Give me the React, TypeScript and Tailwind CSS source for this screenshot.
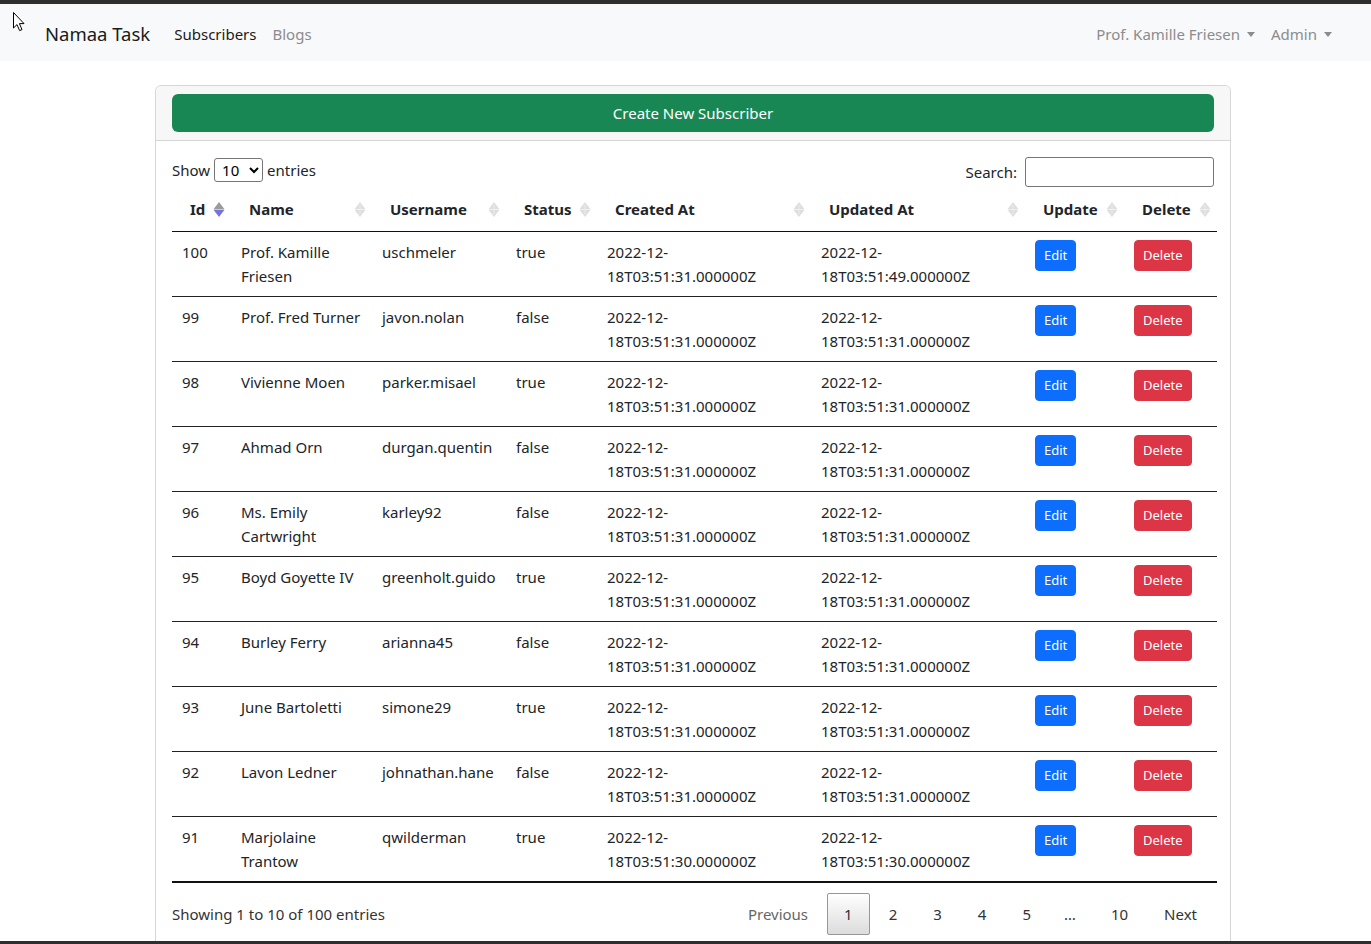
import React from "react";

type Row = {
  id: number;
  name: string[];
  username: string;
  status: string;
  created: string;
  updated: string;
};

const rows: Row[] = [
  { id: 100, name: ["Prof. Kamille", "Friesen"], username: "uschmeler", status: "true", created: "18T03:51:31.000000Z", updated: "18T03:51:49.000000Z" },
  { id: 99, name: ["Prof. Fred Turner"], username: "javon.nolan", status: "false", created: "18T03:51:31.000000Z", updated: "18T03:51:31.000000Z" },
  { id: 98, name: ["Vivienne Moen"], username: "parker.misael", status: "true", created: "18T03:51:31.000000Z", updated: "18T03:51:31.000000Z" },
  { id: 97, name: ["Ahmad Orn"], username: "durgan.quentin", status: "false", created: "18T03:51:31.000000Z", updated: "18T03:51:31.000000Z" },
  { id: 96, name: ["Ms. Emily", "Cartwright"], username: "karley92", status: "false", created: "18T03:51:31.000000Z", updated: "18T03:51:31.000000Z" },
  { id: 95, name: ["Boyd Goyette IV"], username: "greenholt.guido", status: "true", created: "18T03:51:31.000000Z", updated: "18T03:51:31.000000Z" },
  { id: 94, name: ["Burley Ferry"], username: "arianna45", status: "false", created: "18T03:51:31.000000Z", updated: "18T03:51:31.000000Z" },
  { id: 93, name: ["June Bartoletti"], username: "simone29", status: "true", created: "18T03:51:31.000000Z", updated: "18T03:51:31.000000Z" },
  { id: 92, name: ["Lavon Ledner"], username: "johnathan.hane", status: "false", created: "18T03:51:31.000000Z", updated: "18T03:51:31.000000Z" },
  { id: 91, name: ["Marjolaine", "Trantow"], username: "qwilderman", status: "true", created: "18T03:51:30.000000Z", updated: "18T03:51:30.000000Z" },
];

function SortIcon({ active = false }: { active?: boolean }) {
  return (
    <svg width="14" height="17" viewBox="0 0 14 17" className="shrink-0">
      <path d="M7 1 L12.5 8.2 L1.5 8.2 Z" fill={active ? "#9b9b9b" : "#dedede"} />
      <path d="M1.5 8.8 L12.5 8.8 L7 16 Z" fill={active ? "#7474dc" : "#dedede"} />
      {!active && <path d="M7 3.5 L7 13.5" stroke="#ececec" strokeWidth="1" />}
    </svg>
  );
}

function Caret() {
  return (
    <span className="inline-block w-0 h-0 ml-[7px] border-l-[4.5px] border-r-[4.5px] border-t-[5px] border-l-transparent border-r-transparent border-t-current align-middle" />
  );
}

const headers: { label: string; active?: boolean }[] = [
  { label: "Id", active: true },
  { label: "Name" },
  { label: "Username" },
  { label: "Status" },
  { label: "Created At" },
  { label: "Updated At" },
  { label: "Update" },
  { label: "Delete" },
];

const widths = [59, 141, 134, 91, 214, 214, 99, 93];

export default function App() {
  return (
    <div className="relative h-[944px] flex flex-col overflow-hidden bg-white font-['Noto_Sans',sans-serif] text-[15px] text-[#212529]">
      <div className="h-1 shrink-0 bg-[#2e2e2e]" />

      <nav className="h-[57px] shrink-0 bg-[#f8f9fa] flex items-center pt-[3px] pl-[45px] pr-[31px]">
        <span className="text-[18.5px] text-[#1a1a1a] mr-4">Namaa Task</span>
        <span className="px-2 text-[#1a1a1a]">Subscribers</span>
        <span className="px-2 text-[#8b8c8d]">Blogs</span>
        <div className="ml-auto flex items-center text-[#8b8c8d]">
          <span className="px-2 flex items-center">
            Prof. Kamille Friesen
            <Caret />
          </span>
          <span className="px-2 flex items-center">
            Admin
            <Caret />
          </span>
        </div>
      </nav>

      <main className="flex-1 overflow-hidden pt-6 pl-[155px]">
        <div className="w-[1076px] border border-[#d6d6d6] rounded-md">
          <div className="bg-[#f7f7f7] border-b border-[#d6d6d6] px-4 py-2 rounded-t-md">
            <button className="w-full h-[38px] rounded-md bg-[#198754] text-white text-[15px]">
              Create New Subscriber
            </button>
          </div>

          <div className="px-4 pt-4 pb-4">
            <div className="flex justify-between h-[30px]">
              <div className="flex items-center h-[26px]">
                <span>Show</span>
                <select
                  defaultValue="10"
                  className="mx-[4px] w-[49px] h-[24px] border border-[#767676] rounded-[3px] bg-white text-[15px] pl-[3px] text-black"
                >
                  <option value="10">10</option>
                  <option value="25">25</option>
                  <option value="50">50</option>
                  <option value="100">100</option>
                </select>
                <span>entries</span>
              </div>
              <div className="flex items-center">
                <span className="mr-2">Search:</span>
                <input className="w-[189px] h-[30px] border border-[#767676] rounded-[3px] bg-white outline-none px-1" />
              </div>
            </div>

            <table className="table-fixed border-collapse w-[1045px]">
              <colgroup>
                {widths.map((w, i) => (
                  <col key={i} style={{ width: w }} />
                ))}
              </colgroup>
              <thead>
                <tr className="border-b border-[#111]">
                  {headers.map((h) => (
                    <th key={h.label} className="py-[10px] pl-[18px] pr-[5px] text-left font-bold leading-6">
                      <div className="flex items-center justify-between">
                        <span className="whitespace-nowrap">{h.label}</span>
                        <SortIcon active={h.active} />
                      </div>
                    </th>
                  ))}
                </tr>
              </thead>
              <tbody>
                {rows.map((r, i) => (
                  <tr
                    key={r.id}
                    className={i === rows.length - 1 ? "border-b-2 border-[#111]" : "border-b border-[#222]"}
                  >
                    <td className="align-top px-[10px] py-2 leading-6">{r.id}</td>
                    <td className="align-top px-[10px] py-2 leading-6 whitespace-nowrap">
                      {r.name.map((n) => (
                        <div key={n}>{n}</div>
                      ))}
                    </td>
                    <td className="align-top px-[10px] py-2 leading-6 whitespace-nowrap">{r.username}</td>
                    <td className="align-top px-[10px] py-2 leading-6">{r.status}</td>
                    <td className="align-top px-[10px] py-2 leading-6 whitespace-nowrap">
                      <div>2022-12-</div>
                      <div>{r.created}</div>
                    </td>
                    <td className="align-top px-[10px] py-2 leading-6 whitespace-nowrap">
                      <div>2022-12-</div>
                      <div>{r.updated}</div>
                    </td>
                    <td className="align-top px-[10px] py-2 h-[64px]">
                      <button className="px-2 py-1 text-[13px] leading-[21px] rounded bg-[#0d6efd] text-white border border-[#0d6efd]">
                        Edit
                      </button>
                    </td>
                    <td className="align-top px-[10px] py-2">
                      <button className="px-2 py-1 text-[13px] leading-[21px] rounded bg-[#dc3545] text-white border border-[#dc3545]">
                        Delete
                      </button>
                    </td>
                  </tr>
                ))}
              </tbody>
            </table>

            <div className="flex items-center justify-between pt-[10px]">
              <span className="text-[#333]">Showing 1 to 10 of 100 entries</span>
              <div className="flex items-center text-[#333]">
                <span className="px-4 py-2 leading-6 border border-transparent text-[#666]">Previous</span>
                <span className="ml-[2px] px-4 py-2 leading-6 border border-[#979797] rounded-[2px] bg-linear-to-b from-white to-[#dcdcdc]">
                  1
                </span>
                {["2", "3", "4", "5"].map((p) => (
                  <span key={p} className="ml-[2px] px-4 py-2 leading-6 border border-transparent">
                    {p}
                  </span>
                ))}
                <span className="px-4 py-2 leading-6">…</span>
                <span className="ml-[2px] px-4 py-2 leading-6 border border-transparent">10</span>
                <span className="ml-[2px] px-4 py-2 leading-6 border border-transparent">Next</span>
              </div>
            </div>
          </div>
        </div>
      </main>

      <div className="h-[3px] shrink-0 bg-[#2e2e2e]" />

      <svg className="absolute left-[12px] top-[11px]" width="14" height="22" viewBox="0 0 14 22">
        <path d="M1.5 1.5 L1.5 17 L5 13.6 L7.6 19.6 L10 18.6 L7.4 12.6 L12 12.6 Z" fill="white" stroke="black" strokeWidth="1" strokeLinejoin="round" />
      </svg>
    </div>
  );
}
